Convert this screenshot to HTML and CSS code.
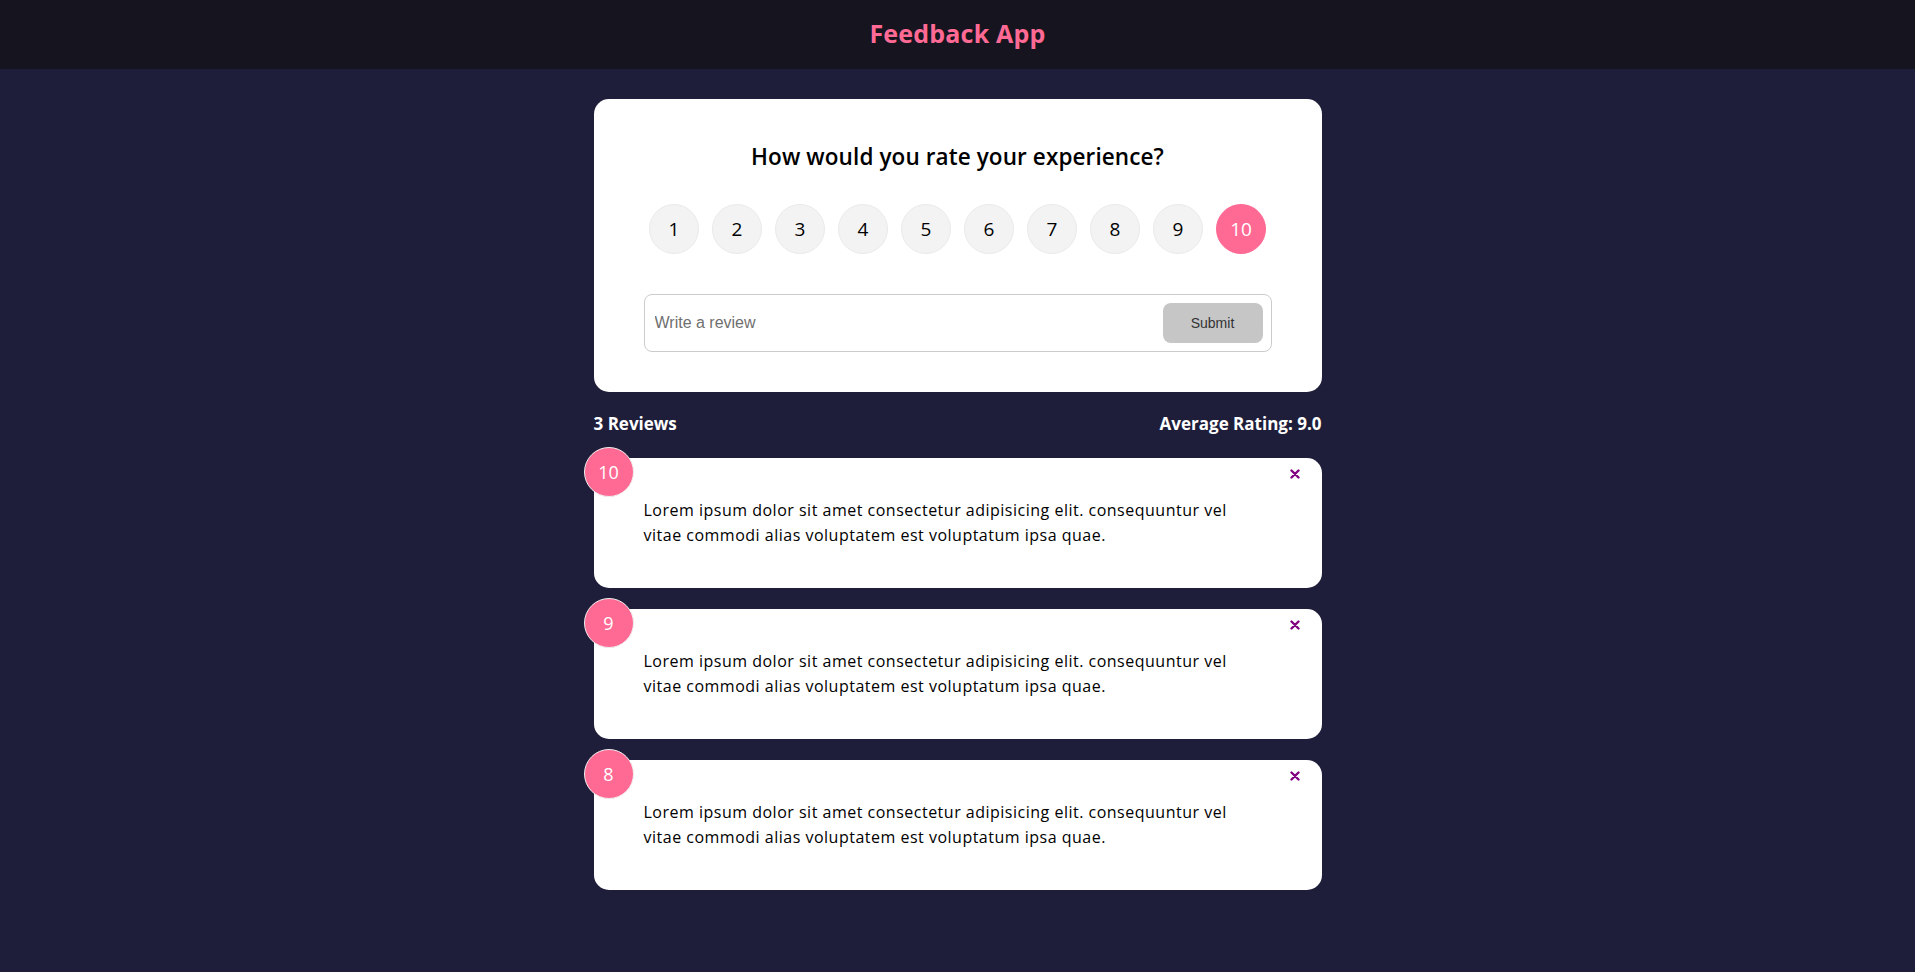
FILE: index.html
```html
<!DOCTYPE html>
<html lang="en">
<head>
<meta charset="utf-8">
<title>Feedback App</title>
<link rel="stylesheet" href="styles.css">
</head>
<body>
<header class="app-header">
  <h1 class="app-title">Feedback App</h1>
</header>
<main class="container">
  <section class="rating-card">
    <h2 class="rating-question">How would you rate your experience?</h2>
    <ul class="rating-scale">
      <li class="rating-option">1</li>
      <li class="rating-option">2</li>
      <li class="rating-option">3</li>
      <li class="rating-option">4</li>
      <li class="rating-option">5</li>
      <li class="rating-option">6</li>
      <li class="rating-option">7</li>
      <li class="rating-option">8</li>
      <li class="rating-option">9</li>
      <li class="rating-option is-selected">10</li>
    </ul>
    <form class="review-form">
      <input class="review-input" type="text" placeholder="Write a review">
      <button class="submit-btn" type="button">Submit</button>
    </form>
  </section>

  <div class="stats">
    <span class="stats-count">3 Reviews</span>
    <span class="stats-average">Average Rating: 9.0</span>
  </div>

  <ul class="review-list">
    <li class="review-card">
      <span class="review-badge">10</span>
      <button class="review-close" type="button" aria-label="Delete">
        <svg viewBox="0 0 10 10" width="10" height="10"><path d="M1.5 1.5 L8.5 8.5 M8.5 1.5 L1.5 8.5" stroke="#800080" stroke-width="2.4" stroke-linecap="round"/></svg>
      </button>
      <p class="review-text">Lorem ipsum dolor sit amet consectetur adipisicing elit. consequuntur vel vitae commodi alias voluptatem est voluptatum ipsa quae.</p>
    </li>
    <li class="review-card">
      <span class="review-badge">9</span>
      <button class="review-close" type="button" aria-label="Delete">
        <svg viewBox="0 0 10 10" width="10" height="10"><path d="M1.5 1.5 L8.5 8.5 M8.5 1.5 L1.5 8.5" stroke="#800080" stroke-width="2.4" stroke-linecap="round"/></svg>
      </button>
      <p class="review-text">Lorem ipsum dolor sit amet consectetur adipisicing elit. consequuntur vel vitae commodi alias voluptatem est voluptatum ipsa quae.</p>
    </li>
    <li class="review-card">
      <span class="review-badge">8</span>
      <button class="review-close" type="button" aria-label="Delete">
        <svg viewBox="0 0 10 10" width="10" height="10"><path d="M1.5 1.5 L8.5 8.5 M8.5 1.5 L1.5 8.5" stroke="#800080" stroke-width="2.4" stroke-linecap="round"/></svg>
      </button>
      <p class="review-text">Lorem ipsum dolor sit amet consectetur adipisicing elit. consequuntur vel vitae commodi alias voluptatem est voluptatum ipsa quae.</p>
    </li>
  </ul>
</main>
</body>
</html>
```

FILE: styles.css
```css
* {
  box-sizing: border-box;
}

html, body {
  margin: 0;
  padding: 0;
}

body {
  background: #1f1e3a;
  font-family: "Open Sans", "DejaVu Sans", sans-serif;
  color: #000;
  min-height: 972px;
}

.app-header {
  height: 69px;
  background: #16151f;
  display: flex;
  align-items: center;
  justify-content: center;
}

.app-title {
  margin: 0;
  color: #ff6a95;
  font-size: 25px;
  font-weight: 700;
  line-height: 1;
  letter-spacing: 0.2px;
  transform: translateY(-1px);
}

.container {
  width: 728px;
  margin: 30px auto 0;
}

.rating-card {
  background: #fff;
  border-radius: 15px;
  padding: 40px 50px;
}

.rating-question {
  margin: 0 0 29px;
  text-align: center;
  font-size: 22.5px;
  font-weight: 600;
  line-height: 36px;
  letter-spacing: 0.1px;
}

.rating-scale {
  list-style: none;
  margin: 0 0 40px;
  padding: 0;
  display: flex;
  justify-content: center;
  gap: 13px;
}

.rating-option {
  width: 50px;
  height: 50px;
  border-radius: 50%;
  background: #f3f3f3;
  border: 1px solid #eaeaea;
  display: flex;
  align-items: center;
  justify-content: center;
  font-size: 19px;
  color: #000;
}

.rating-option.is-selected {
  background: #ff6a95;
  border-color: #ff6a95;
  color: #fff;
}

.review-form {
  display: flex;
  align-items: center;
  height: 58px;
  border: 1px solid #ccc;
  border-radius: 8px;
  padding: 0 8px 0 10px;
}

.review-input {
  flex: 1;
  border: none;
  outline: none;
  font-family: "Liberation Sans", Arial, sans-serif;
  font-size: 16px;
  padding: 0;
  background: transparent;
}

.review-input::placeholder {
  color: #6f6f6f;
}

.submit-btn {
  width: 100px;
  height: 40px;
  border: none;
  border-radius: 8px;
  background: #c6c6c6;
  color: #333;
  font-family: "Liberation Sans", Arial, sans-serif;
  font-size: 14px;
}

.stats {
  display: flex;
  justify-content: space-between;
  align-items: center;
  margin: 20px 0 22px;
  color: #fff;
  font-size: 17px;
  font-weight: 700;
  line-height: 24px;
  letter-spacing: 0;
}

.review-list {
  list-style: none;
  margin: 0;
  padding: 0;
  display: flex;
  flex-direction: column;
  gap: 21px;
}

.review-card {
  position: relative;
  background: #fff;
  border-radius: 15px;
  padding: 40px 50px;
}

.review-badge {
  position: absolute;
  top: -11px;
  left: -10px;
  width: 50px;
  height: 50px;
  border-radius: 50%;
  background: #ff6a95;
  border: 1px solid #eee;
  color: #fff;
  font-size: 18px;
  display: flex;
  align-items: center;
  justify-content: center;
}

.review-close {
  position: absolute;
  top: 11px;
  right: 22px;
  width: 10px;
  height: 10px;
  padding: 0;
  border: none;
  background: none;
  display: flex;
}

.review-text {
  margin: 0;
  font-size: 16px;
  line-height: 25px;
  letter-spacing: 0.5px;
  padding-right: 30px;
}
```
